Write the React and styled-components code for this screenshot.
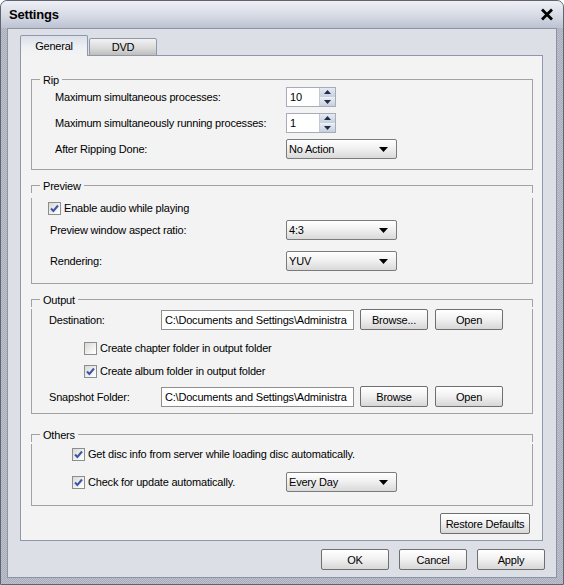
import React from "react";
import styled, { createGlobalStyle } from "styled-components";

const GlobalStyle = createGlobalStyle`
  html, body { margin: 0; padding: 0; background: #fff; }
  body {
    font-family: "Liberation Sans", Arial, sans-serif;
    font-size: 11px;
    letter-spacing: -0.2px;
    color: #000;
  }
  * { box-sizing: border-box; }
`;

const Window = styled.div`
  width: 564px;
  height: 585px;
  display: flex;
  flex-direction: column;
  border: 1px solid #5f6372;
  border-radius: 7px 7px 0 0;
  padding: 0 6px 6px;
  overflow: hidden;
  background: repeating-conic-gradient(#a7abb9 0 25%, #c0c4d0 0 50%) 0 0 / 2px 2px;
`;

const TitleBar = styled.div`
  height: 27px;
  margin: 0 -6px;
  padding: 0 9px 0 8px;
  display: flex;
  align-items: center;
  justify-content: space-between;
  background: linear-gradient(#eef0f5, #d6dae4 55%, #bcc2d2);
`;

const Title = styled.span`
  font-size: 13px;
  font-weight: bold;
  letter-spacing: -0.2px;
`;

const Body = styled.div`
  flex: 1;
  display: flex;
  flex-direction: column;
  border: 1px solid #8f93a0;
  background: #dddfe7;
  padding: 6px 13px 7px 12px;
`;

const TabRow = styled.div`
  display: flex;
  align-items: flex-end;
  gap: 1px;
  height: 21px;
  margin-bottom: -1px;
  position: relative;
  z-index: 1;
`;

const Tab = styled.div`
  width: 68px;
  height: ${(p) => (p.$active ? 21 : 18)}px;
  display: flex;
  align-items: center;
  justify-content: center;
  border: 1px solid #8f98aa;
  border-bottom: ${(p) => (p.$active ? "none" : "1px solid #8f98aa")};
  border-radius: 2px 2px 0 0;
  background: ${(p) =>
    p.$active
      ? "linear-gradient(#d9dfea, #eef0f3 55%, #f3f3f3)"
      : "linear-gradient(#f2f2f2, #d8d8d8 60%, #bdbdbd)"};
`;

const Panel = styled.div`
  flex: 1;
  display: flex;
  flex-direction: column;
  background: #f3f3f3;
  border: 1px solid #8f98aa;
  padding: 18px 9px 0 10px;
`;

const Group = styled.div`
  margin-top: ${(p) => p.$mt || 0}px;
`;

const GroupHead = styled.div`
  display: flex;
  height: 13px;
  line-height: 13px;
  &::before {
    content: "";
    width: 8px;
    height: 7px;
    align-self: flex-end;
    border-left: 1px solid #a2a2a2;
    border-top: 1px solid #a2a2a2;
  }
  &::after {
    content: "";
    flex: 1;
    height: 7px;
    align-self: flex-end;
    border-top: 1px solid #a2a2a2;
    border-right: 1px solid #a2a2a2;
  }
`;

const Legend = styled.span`
  padding: 0 3px;
`;

const GroupBody = styled.div`
  border: 1px solid #a2a2a2;
  border-top: none;
  padding-bottom: ${(p) => p.$pb}px;
`;

const Row = styled.div`
  display: grid;
  grid-template-columns: ${(p) => p.$col || "254px"} auto;
  align-items: center;
  height: ${(p) => p.$h || 20}px;
  margin-top: ${(p) => p.$mt || 0}px;
`;

const Label = styled.span`
  padding-left: ${(p) => p.$indent || 0}px;
  white-space: nowrap;
`;

const Controls = styled.div`
  display: flex;
  align-items: center;
`;

const CheckLabel = styled.label`
  display: flex;
  align-items: center;
  gap: 3px;
  padding-left: ${(p) => p.$indent || 0}px;
  white-space: nowrap;
`;

const Box = styled.span`
  width: 13px;
  height: 13px;
  flex: none;
  border: 1px solid #8c8d8f;
  background: linear-gradient(135deg, #d8d8d4, #f6f6f4 70%, #ffffff);
  display: flex;
  align-items: center;
  justify-content: center;
`;

const Spin = styled.div`
  display: flex;
  width: 50px;
  height: 20px;
  border: 1px solid #a6adb8;
  background: #fff;
`;

const SpinValue = styled.div`
  flex: 1;
  display: flex;
  align-items: center;
  padding-left: 3px;
`;

const SpinArrows = styled.div`
  width: 16px;
  display: flex;
  flex-direction: column;
  border-left: 1px solid #c3cad6;
`;

const SpinHalf = styled.div`
  flex: 1;
  display: flex;
  align-items: center;
  justify-content: center;
  background: linear-gradient(#e6ebf2, #c5cfdd);
  border-top: ${(p) => (p.$down ? "1px solid #eef1f6" : "none")};
`;

const Select = styled.div`
  width: 111px;
  height: 20px;
  display: flex;
  align-items: center;
  justify-content: space-between;
  padding: 0 8px 0 2px;
  border: 1px solid #7b7b7b;
  border-radius: 2px;
  background: linear-gradient(#ffffff, #f1f1f1 45%, #d9d9d9);
`;

const Field = styled.div`
  width: 193px;
  height: 20px;
  display: flex;
  align-items: center;
  padding-left: 3px;
  border: 1px solid #8f8f8f;
  background: #fff;
  overflow: hidden;
  white-space: nowrap;
`;

const Button = styled.button`
  width: ${(p) => p.$w || 68}px;
  height: 21px;
  margin-left: ${(p) => p.$ml || 0}px;
  padding: 0;
  border: 1px solid #6f6f6f;
  border-radius: 2px;
  background: linear-gradient(#ffffff, #f2f2f2 45%, #d7d7d7);
  font: inherit;
  letter-spacing: inherit;
  color: #000;
`;

const RestoreRow = styled.div`
  display: flex;
  justify-content: flex-end;
  margin: 7px 3px 0 0;
`;

const Footer = styled.div`
  display: flex;
  justify-content: flex-end;
  gap: 10px;
  margin: 8px -2px 0 0;
`;

const CloseIcon = () => (
  <svg width="14" height="13" viewBox="0 0 14 13">
    <path d="M2 1.5 L12 11.5 M12 1.5 L2 11.5" stroke="#000" strokeWidth="2.8" />
  </svg>
);

const Checkbox = ({ checked, indent, children }) => (
  <CheckLabel $indent={indent}>
    <Box>
      {checked && (
        <svg width="9" height="9" viewBox="0 0 9 9">
          <path d="M1 4.5 L3.4 7 L8 1.5" fill="none" stroke="#3d55a8" strokeWidth="2" />
        </svg>
      )}
    </Box>
    {children}
  </CheckLabel>
);

const Spinner = ({ value }) => (
  <Spin>
    <SpinValue>{value}</SpinValue>
    <SpinArrows>
      <SpinHalf>
        <svg width="7" height="4" viewBox="0 0 7 4">
          <path d="M0 4 L3.5 0 L7 4 Z" fill="#1f2c4a" />
        </svg>
      </SpinHalf>
      <SpinHalf $down>
        <svg width="7" height="4" viewBox="0 0 7 4">
          <path d="M0 0 L7 0 L3.5 4 Z" fill="#1f2c4a" />
        </svg>
      </SpinHalf>
    </SpinArrows>
  </Spin>
);

const Dropdown = ({ value }) => (
  <Select>
    <span>{value}</span>
    <svg width="9" height="5" viewBox="0 0 9 5">
      <path d="M0 0 L9 0 L4.5 5 Z" fill="#000" />
    </svg>
  </Select>
);

// the field only shows the start of the path, as in the dialog
const path = "C:\\Documents and Settings\\Administra";

export default function App() {
  return (
    <>
      <GlobalStyle />
      <Window>
        <TitleBar>
          <Title>Settings</Title>
          <CloseIcon />
        </TitleBar>
        <Body>
          <TabRow>
            <Tab $active>General</Tab>
            <Tab>DVD</Tab>
          </TabRow>
          <Panel>
            <Group>
              <GroupHead><Legend>Rip</Legend></GroupHead>
              <GroupBody $pb={10}>
                <Row>
                  <Label $indent={23}>Maximum simultaneous processes:</Label>
                  <Spinner value="10" />
                </Row>
                <Row $mt={6}>
                  <Label $indent={23}>Maximum simultaneously running processes:</Label>
                  <Spinner value="1" />
                </Row>
                <Row $mt={6}>
                  <Label $indent={23}>After Ripping Done:</Label>
                  <Dropdown value="No Action" />
                </Row>
              </GroupBody>
            </Group>

            <Group $mt={10}>
              <GroupHead><Legend>Preview</Legend></GroupHead>
              <GroupBody $pb={12}>
                <Row $mt={5} $col="1fr">
                  <Checkbox checked indent={16}>Enable audio while playing</Checkbox>
                </Row>
                <Row $mt={2}>
                  <Label $indent={18}>Preview window aspect ratio:</Label>
                  <Dropdown value="4:3" />
                </Row>
                <Row $mt={11}>
                  <Label $indent={18}>Rendering:</Label>
                  <Dropdown value="YUV" />
                </Row>
              </GroupBody>
            </Group>

            <Group $mt={10}>
              <GroupHead><Legend>Output</Legend></GroupHead>
              <GroupBody $pb={6}>
                <Row $mt={2} $h={21} $col="129px">
                  <Label $indent={17}>Destination:</Label>
                  <Controls>
                    <Field>{path}</Field>
                    <Button $ml={6}>Browse...</Button>
                    <Button $ml={7}>Open</Button>
                  </Controls>
                </Row>
                <Row $mt={8} $col="1fr">
                  <Checkbox indent={52}>Create chapter folder in output folder</Checkbox>
                </Row>
                <Row $mt={3} $col="1fr">
                  <Checkbox checked indent={52}>Create album folder in output folder</Checkbox>
                </Row>
                <Row $mt={5} $h={21} $col="129px">
                  <Label $indent={17}>Snapshot Folder:</Label>
                  <Controls>
                    <Field>{path}</Field>
                    <Button $ml={6}>Browse</Button>
                    <Button $ml={7}>Open</Button>
                  </Controls>
                </Row>
              </GroupBody>
            </Group>

            <Group $mt={15}>
              <GroupHead><Legend>Others</Legend></GroupHead>
              <GroupBody $pb={13}>
                <Row $mt={2} $col="1fr">
                  <Checkbox checked indent={40}>
                    Get disc info from server while loading disc automatically.
                  </Checkbox>
                </Row>
                <Row $mt={8}>
                  <Checkbox checked indent={40}>Check for update automatically.</Checkbox>
                  <Dropdown value="Every Day" />
                </Row>
              </GroupBody>
            </Group>

            <RestoreRow>
              <Button $w={90}>Restore Defaults</Button>
            </RestoreRow>
          </Panel>
          <Footer>
            <Button>OK</Button>
            <Button>Cancel</Button>
            <Button>Apply</Button>
          </Footer>
        </Body>
      </Window>
    </>
  );
}
